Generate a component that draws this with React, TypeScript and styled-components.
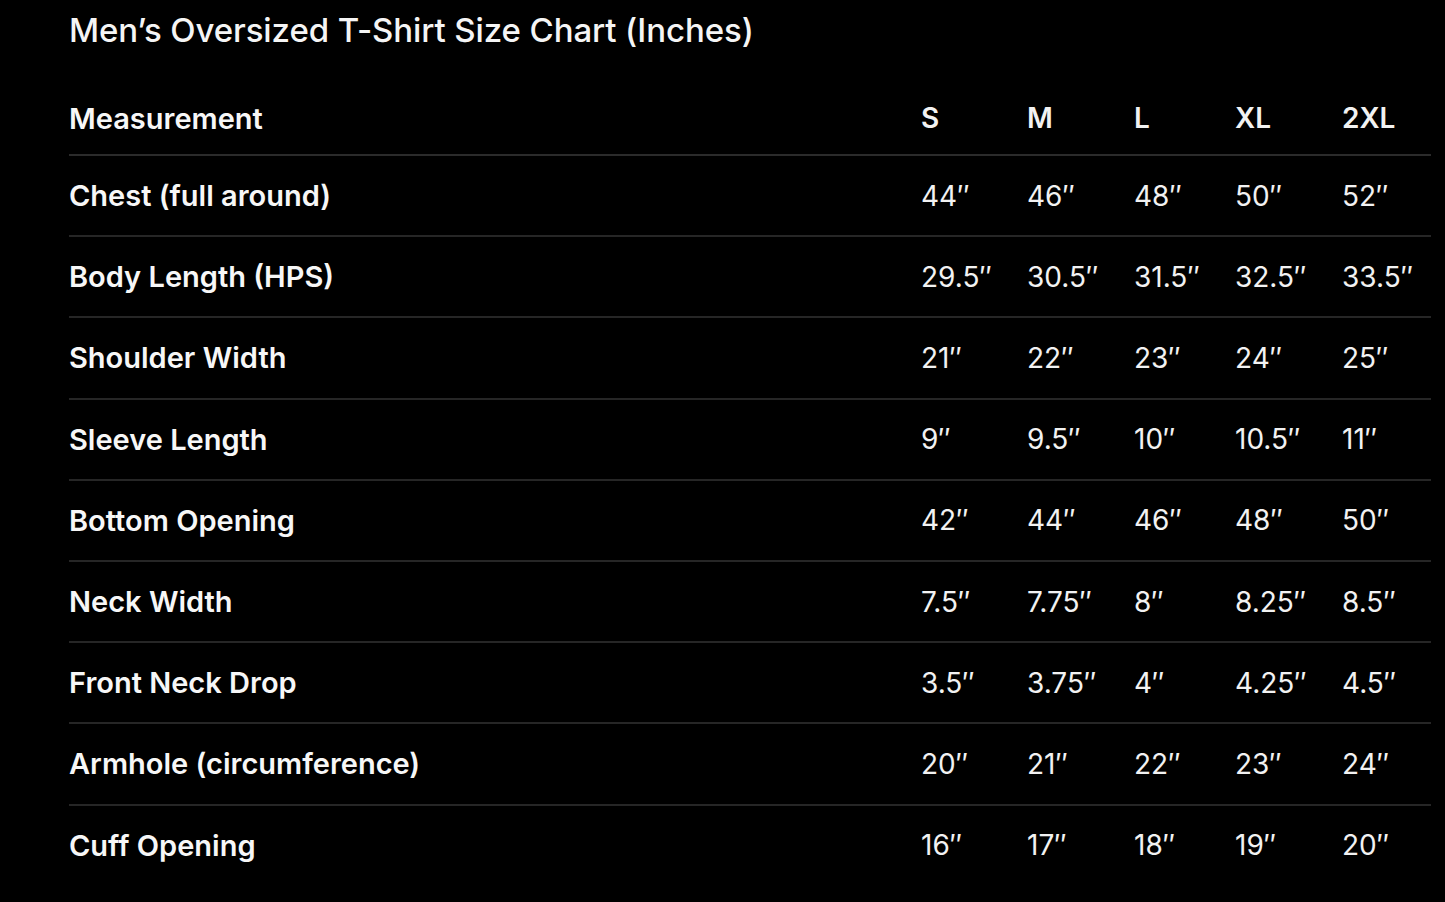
import React from "react";
import styled, { createGlobalStyle } from "styled-components";

const Global = createGlobalStyle`
  html, body { margin: 0; padding: 0; background: #000; }
  body { font-family: Inter, "Noto Sans", "Liberation Sans", sans-serif; color: #fff; }
`;

const Page = styled.div`
  background: #000;
  min-height: 902px;
  padding: 12px 14px 0 69px;
  box-sizing: border-box;
`;

const Title = styled.h1`
  margin: 0;
  font-size: 33px;
  line-height: 36px;
  font-weight: 500;
  letter-spacing: -0.1px;
  color: #f5f5f5;
`;

const Table = styled.div`
  margin-top: 39px;
  width: 1362px;
`;

const Row = styled.div<{ $head?: boolean }>`
  display: grid;
  grid-template-columns: 852px 106px 107px 101px 107px 89px;
  align-items: center;
  height: ${(p) => (p.$head ? "62px" : "79.2px")};
  border-bottom: ${(p) => (p.$head ? "2px solid #2b2b2b" : "none")};
  border-top: ${(p) => (p.$head ? "none" : "2px solid #262626")};
  &:nth-child(2) { border-top: none; }
  padding-bottom: ${(p) => (p.$head ? "5px" : "0")};
`;

const Label = styled.div`
  font-size: 29px;
  font-weight: 600;
  color: #f7f7f7;
  white-space: nowrap;
`;

const Cell = styled.div<{ $head?: boolean }>`
  font-size: 28px;
  font-weight: ${(p) => (p.$head ? 600 : 400)};
  color: #f2f2f2;
  white-space: nowrap;
`;

const sizes = ["S", "M", "L", "XL", "2XL"];
const rows: [string, string[]][] = [
  ["Chest (full around)", ["44″", "46″", "48″", "50″", "52″"]],
  ["Body Length (HPS)", ["29.5″", "30.5″", "31.5″", "32.5″", "33.5″"]],
  ["Shoulder Width", ["21″", "22″", "23″", "24″", "25″"]],
  ["Sleeve Length", ["9″", "9.5″", "10″", "10.5″", "11″"]],
  ["Bottom Opening", ["42″", "44″", "46″", "48″", "50″"]],
  ["Neck Width", ["7.5″", "7.75″", "8″", "8.25″", "8.5″"]],
  ["Front Neck Drop", ["3.5″", "3.75″", "4″", "4.25″", "4.5″"]],
  ["Armhole (circumference)", ["20″", "21″", "22″", "23″", "24″"]],
  ["Cuff Opening", ["16″", "17″", "18″", "19″", "20″"]],
];

export default function App() {
  return (
    <Page>
      <Global />
      <Title>Men’s Oversized T-Shirt Size Chart (Inches)</Title>
      <Table>
        <Row $head>
          <Label>Measurement</Label>
          {sizes.map((s) => (
            <Cell $head key={s}>{s}</Cell>
          ))}
        </Row>
        {rows.map(([name, vals]) => (
          <Row key={name}>
            <Label>{name}</Label>
            {vals.map((v, i) => (
              <Cell key={i}>{v}</Cell>
            ))}
          </Row>
        ))}
      </Table>
    </Page>
  );
}
